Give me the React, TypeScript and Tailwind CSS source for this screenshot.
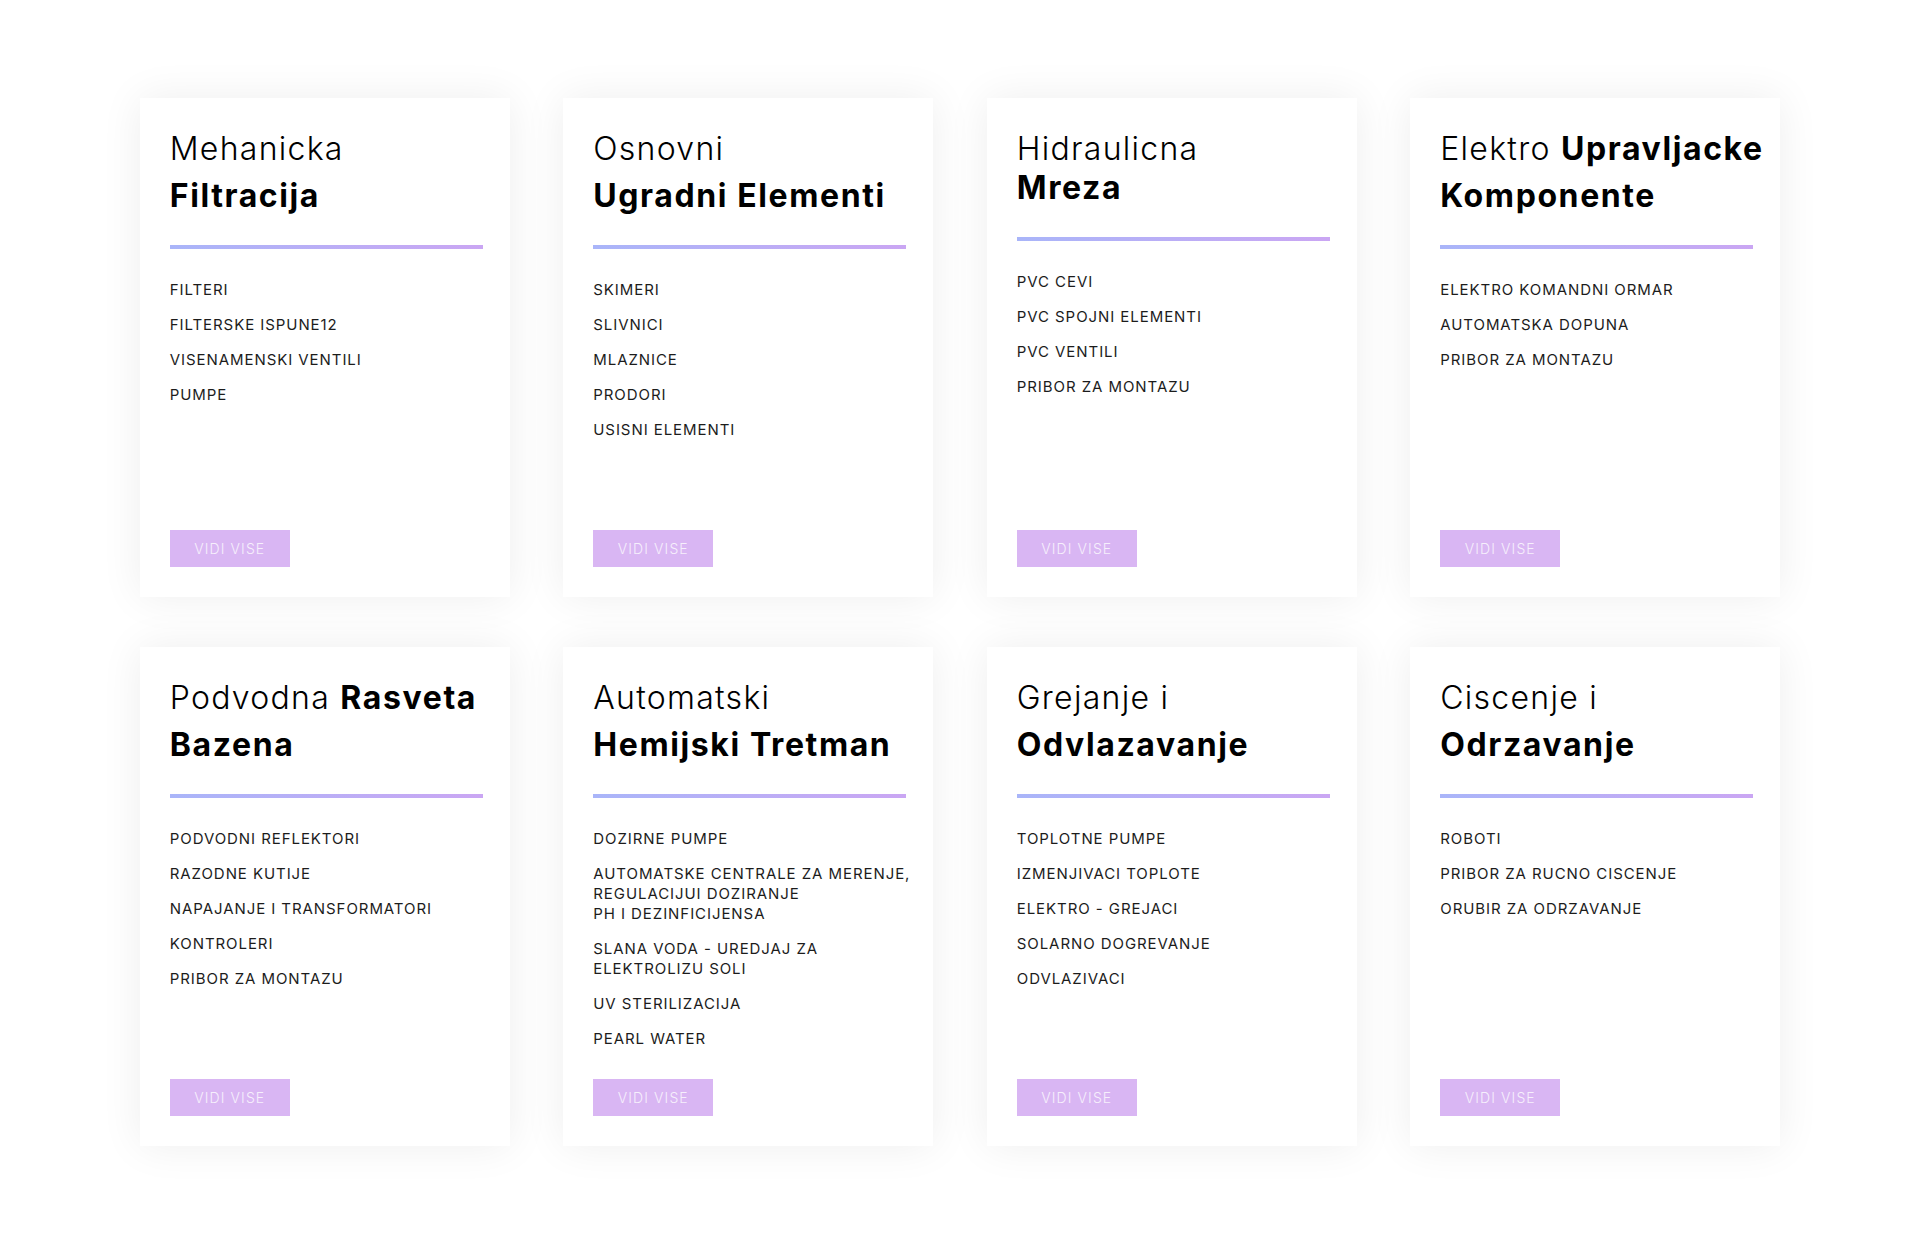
import React from 'react';

interface CategoryCardProps {
    title: React.ReactNode;
    items: string[][];
}

const CategoryCard: React.FC<CategoryCardProps> = ({ title, items }) => (
    <div className="bg-white h-[499px] w-[370px] pt-[27px] pb-[30px] pl-[30px] pr-[20px] flex flex-col shadow-[0_0_40px_rgba(0,0,0,0.07)]">
        <h2 className="text-[32px] leading-[47px] text-black font-light tracking-[0.04em] whitespace-nowrap">{title}</h2>
        <div className="mt-[26px] h-[4px] w-[313px] bg-gradient-to-r from-[#a9b5f9] to-[#caa6f3]" />
        <ul className="mt-[31px] flex flex-col gap-[15px]">
            {items.map((lines, i) => (
                <li key={i} className="text-[15px] leading-[20px] text-[#1c1c1c] tracking-[0.062em] whitespace-nowrap">
                    {lines.map((l, j) => (
                        <span key={j} className="block">{l}</span>
                    ))}
                </li>
            ))}
        </ul>
        <div className="mt-auto">
            <button className="w-[120px] h-[37px] bg-[#d9b6f3] text-[#f6effc] text-[14px] font-light tracking-[0.08em]">
                VIDI VISE
            </button>
        </div>
    </div>
);

const B: React.FC<{ children: React.ReactNode }> = ({ children }) => (
    <span className="font-bold tracking-[0.05em]">{children}</span>
);

const cards: CategoryCardProps[] = [
    {
        title: <>Mehanicka<br /><B>Filtracija</B></>,
        items: [['FILTERI'], ['FILTERSKE ISPUNE12'], ['VISENAMENSKI VENTILI'], ['PUMPE']],
    },
    {
        title: <>Osnovni<br /><B>Ugradni Elementi</B></>,
        items: [['SKIMERI'], ['SLIVNICI'], ['MLAZNICE'], ['PRODORI'], ['USISNI ELEMENTI']],
    },
    {
        title: <><span className="block">Hidraulicna</span><span className="block font-bold tracking-[0.05em] -mt-[8px]">Mreza</span></>,
        items: [['PVC CEVI'], ['PVC SPOJNI ELEMENTI'], ['PVC VENTILI'], ['PRIBOR ZA MONTAZU']],
    },
    {
        title: <>Elektro <B>Upravljacke</B><br /><B>Komponente</B></>,
        items: [['ELEKTRO KOMANDNI ORMAR'], ['AUTOMATSKA DOPUNA'], ['PRIBOR ZA MONTAZU']],
    },
    {
        title: <>Podvodna <B>Rasveta</B><br /><B>Bazena</B></>,
        items: [['PODVODNI REFLEKTORI'], ['RAZODNE KUTIJE'], ['NAPAJANJE I TRANSFORMATORI'], ['KONTROLERI'], ['PRIBOR ZA MONTAZU']],
    },
    {
        title: <>Automatski<br /><B>Hemijski Tretman</B></>,
        items: [
            ['DOZIRNE PUMPE'],
            ['AUTOMATSKE CENTRALE ZA MERENJE,', 'REGULACIJUI DOZIRANJE', 'PH I DEZINFICIJENSA'],
            ['SLANA VODA - UREDJAJ ZA', 'ELEKTROLIZU SOLI'],
            ['UV STERILIZACIJA'],
            ['PEARL WATER'],
        ],
    },
    {
        title: <>Grejanje i<br /><B>Odvlazavanje</B></>,
        items: [['TOPLOTNE PUMPE'], ['IZMENJIVACI TOPLOTE'], ['ELEKTRO - GREJACI'], ['SOLARNO DOGREVANJE'], ['ODVLAZIVACI']],
    },
    {
        title: <>Ciscenje i<br /><B>Odrzavanje</B></>,
        items: [['ROBOTI'], ['PRIBOR ZA RUCNO CISCENJE'], ['ORUBIR ZA ODRZAVANJE']],
    },
];

export default function App() {
    return (
        <div className="min-h-[1245px] bg-white pt-[98px] font-['Inter','Liberation_Sans',sans-serif]">
            <div className="grid grid-cols-[repeat(4,370px)] justify-center gap-x-[53.5px] gap-y-[50px]">
                {cards.map((c, i) => (
                    <CategoryCard key={i} {...c} />
                ))}
            </div>
        </div>
    );
}
